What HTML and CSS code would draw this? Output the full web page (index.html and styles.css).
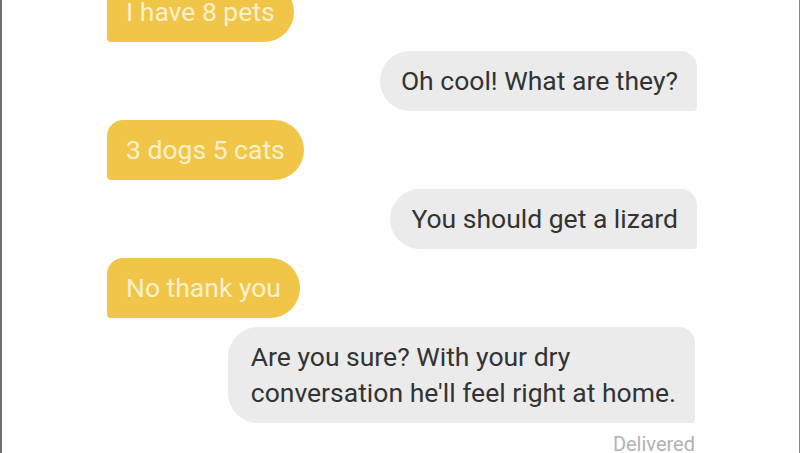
FILE: index.html
```html
<!DOCTYPE html>
<html>
<head>
<meta charset="utf-8">
<link rel="stylesheet" href="styles.css">
</head>
<body>
<div class="frame">
  <div class="thread">
    <div class="msg in first">I have 8 pets</div>
    <div class="msg out">Oh cool! What are they?</div>
    <div class="msg in">3 dogs 5 cats</div>
    <div class="msg out">You should get a lizard</div>
    <div class="msg in">No thank you</div>
    <div class="msg out wide">Are you sure? With your dry<br>conversation he'll feel right at home.</div>
    <div class="status">Delivered</div>
  </div>
</div>
</body>
</html>
```
FILE: styles.css
```css
html, body {
  margin: 0;
  padding: 0;
  background: #fff;
}
.frame {
  width: 800px;
  height: 453px;
  box-sizing: border-box;
  border-left: 2px solid #6f6f6f;
  border-right: 1px solid #8a8a8a;
  overflow: hidden;
  background: #fefefe;
}
.thread {
  margin-left: 105px;
  width: 590px;
  margin-top: -18px;
  display: flex;
  flex-direction: column;
  gap: 9px;
  font-family: Roboto, "Noto Sans", sans-serif;
  font-size: 26.5px;
}
.msg {
  line-height: 36px;
  padding: 12px 19px;
}
.in {
  align-self: flex-start;
  background: #f1c648;
  color: #fbf0cd;
  border-radius: 16px 30px 30px 4px;
}
.out {
  align-self: flex-end;
  background: #ebebeb;
  color: #333;
  border-radius: 30px 16px 4px 30px;
  padding-left: 21px;
}
.wide {
  margin-right: 2px;
  padding-left: 23px;
}
.status {
  align-self: flex-end;
  margin-right: 2px;
  font-size: 20px;
  color: #b2b2b2;
  line-height: 20px;
  margin-top: 2px;
}
```
